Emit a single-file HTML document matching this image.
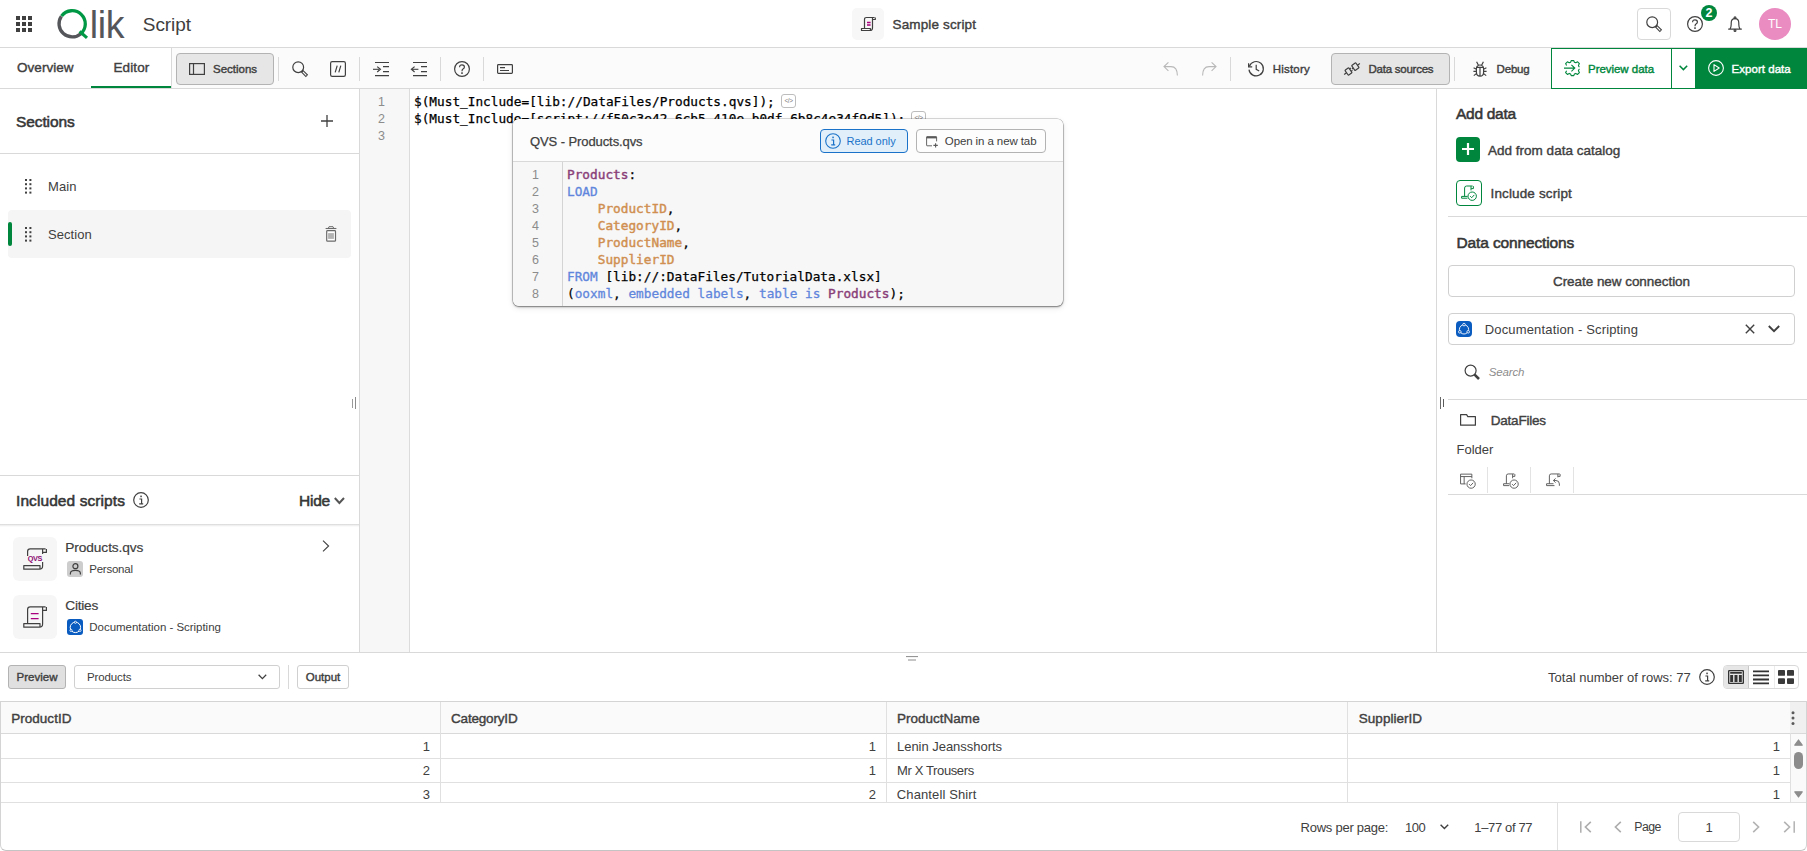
<!DOCTYPE html>
<html lang="en">
<head>
<meta charset="utf-8">
<title>Sample script - Script</title>
<style>
*{box-sizing:border-box;margin:0;padding:0}
html,body{width:1807px;height:851px;overflow:hidden;background:#fff}
body{font-family:"Liberation Sans",sans-serif;color:#404040;font-size:13px;position:relative}
.abs{position:absolute}
.t{position:absolute;white-space:nowrap;line-height:1}
.b{font-weight:normal;-webkit-text-stroke:0.4px}
.b2{font-weight:normal;-webkit-text-stroke:0.55px;color:#363636}
svg{position:absolute;overflow:visible}
.ic{fill:none;stroke:#404040;stroke-width:1.2}
.sep{position:absolute;width:1px;background:#d9d9d9}
.hl{position:absolute;height:1px;background:#d9d9d9}
.mono{font-family:"DejaVu Sans Mono","Liberation Mono",monospace;font-size:12.75px;line-height:17px;white-space:pre;-webkit-text-stroke:0.25px}
.ln{font-family:"Liberation Sans",sans-serif;font-size:12.5px;color:#8c8c8c;text-align:right;line-height:17px}
/* header */
#hdr{left:0;top:0;width:1807px;height:48px;border-bottom:1px solid #d9d9d9;background:#fff}
#tb{left:0;top:48px;width:1807px;height:41px;border-bottom:1px solid #d9d9d9;background:#fbfbfb}
#tabs{left:0;top:48px;width:172px;height:40px;background:#fff;border-right:1px solid #d9d9d9}
.btn{position:absolute;border:1px solid #b3b3b3;border-radius:4px;background:#e6e6e6}
.kw{color:#5f86dc;-webkit-text-stroke:0.3px}
.fld{color:#d08f50;-webkit-text-stroke:0.42px}
.tbl{color:#8a3f79;-webkit-text-stroke:0.42px}
</style>
</head>
<body>
<!-- ================= HEADER ================= -->
<div id="hdr" class="abs"></div>
<div id="tb" class="abs"></div>
<div id="tabs" class="abs"></div>
<!-- app launcher grid -->
<svg style="left:16px;top:16px" width="16" height="16" viewBox="0 0 16 16"><g fill="#404040"><rect x="0" y="0" width="4" height="4"/><rect x="6" y="0" width="4" height="4"/><rect x="12" y="0" width="4" height="4"/><rect x="0" y="6" width="4" height="4"/><rect x="6" y="6" width="4" height="4"/><rect x="12" y="6" width="4" height="4"/><rect x="0" y="12" width="4" height="4"/><rect x="6" y="12" width="4" height="4"/><rect x="12" y="12" width="4" height="4"/></g></svg>
<!-- Qlik logo -->
<svg style="left:54px;top:6px" width="74" height="36" viewBox="54 6 74 36" aria-label="Qlik"><title>Qlik</title>
<path d="M80.9 33.7 A13.2 13.2 0 0 1 61.4 16.2" fill="none" stroke="#54565a" stroke-width="3.3"/>
<path d="M61.6 15.9 A13.2 13.2 0 1 1 80.6 34" fill="none" stroke="#009845" stroke-width="3.3"/>
<path d="M79.6 31.4 L87 37.9" fill="none" stroke="#009845" stroke-width="3.2"/>
<text x="89.7" y="38.2" transform="translate(0,38.2) scale(1,1.02) translate(0,-38.2)" font-family="Liberation Sans, sans-serif" font-size="37.5" fill="#54565a" letter-spacing="-0.35">lik</text>
</svg>
<div class="t" style="left:142.8px;top:15px;font-size:19px;color:#404040;letter-spacing:-0.07px">Script</div>
<!-- center title -->
<div class="abs" style="left:852px;top:8px;width:32px;height:32px;background:#f7f7f7;border-radius:5px"></div>
<svg style="left:860px;top:16px" width="16" height="16" viewBox="0 0 16 16"><path class="ic" d="M4.5 12.5 V3.5 Q4.5 1.5 6.5 1.5 H14.5 M12.5 1.6 V12 Q12.5 14.5 10 14.5 H1.5 V12.5 H10.4 V14.3 M12.6 3.5 H15.3 V1.6" stroke-linejoin="round"/><path d="M7 6.5h3.6M7 9h3.6" stroke="#a8007e" stroke-width="1.3" fill="none"/></svg>
<div class="t b" style="left:892.5px;top:18px;font-size:13.5px;color:#404040;letter-spacing:0.14px">Sample script</div>
<!-- right icons -->
<div class="abs" style="left:1637px;top:8px;width:34px;height:32px;border:1px solid #d9d9d9;border-radius:4px;background:#fff"></div>
<svg style="left:1646px;top:16px" width="16" height="16" viewBox="0 0 16 16"><circle cx="6.2" cy="6.2" r="5.4" class="ic" stroke-width="1.3"/><path d="M10.1 10.1 L15 15" stroke="#404040" stroke-width="3.2" fill="none"/><path d="M10.9 10.9 L14.3 14.3" stroke="#fff" stroke-width="1.2" fill="none"/></svg>
<svg style="left:1687px;top:16px" width="16" height="16" viewBox="0 0 16 16"><circle cx="8" cy="8" r="7.4" class="ic"/><path class="ic" d="M5.6 6.2 Q5.6 3.8 8 3.8 Q10.4 3.8 10.4 6 Q10.4 7.3 9 8 Q8 8.6 8 10.2" stroke-width="1.4"/><rect x="7.2" y="11.3" width="1.6" height="1.6" fill="#404040"/></svg>
<div class="abs" style="left:1701px;top:5px;width:16px;height:16px;border-radius:8px;background:#00873d"></div>
<div class="t" style="left:1701px;top:6.5px;width:16px;text-align:center;font-size:12.5px;font-weight:bold;color:#fff">2</div>
<svg style="left:1727px;top:16px" width="16" height="16" viewBox="0 0 16 16"><path class="ic" d="M1.2 13.1 H14.8 M2.9 13.1 Q4.2 11.4 4.2 8.6 V7 Q4.2 2.7 8 2.7 Q11.8 2.7 11.8 7 V8.6 Q11.8 11.4 13.1 13.1" stroke-width="1.1"/><circle cx="8" cy="1.7" r="0.9" class="ic" stroke-width="0.9"/><circle cx="8" cy="14.4" r="0.9" class="ic" stroke-width="0.9"/></svg>
<div class="abs" style="left:1759px;top:8px;width:32px;height:32px;border-radius:16px;background:#ea8cc2"></div>
<div class="t" style="left:1759px;top:18px;width:32px;text-align:center;font-size:12px;color:#fff">TL</div>
<!--HEADER-END-->
<!-- tabs -->
<div class="t b" style="left:17px;top:61px;font-size:13.5px;letter-spacing:0.04px">Overview</div>
<div class="t b" style="left:113.4px;top:61px;font-size:13.5px;letter-spacing:0.13px">Editor</div>
<div class="abs" style="left:91px;top:86px;width:80px;height:2px;background:#00873d"></div>
<!-- Sections button -->
<div class="btn" style="left:176px;top:53px;width:98px;height:32px"></div>
<svg style="left:189px;top:63px" width="16" height="12" viewBox="0 0 16 12"><rect x="0.6" y="0.6" width="14.8" height="10.8" class="ic"/><path d="M4.5 0.6V11.4" class="ic"/></svg>
<div class="t b" style="left:213px;top:63.8px;font-size:11.5px;letter-spacing:-0.01px">Sections</div>
<div class="sep" style="left:278px;top:57px;height:24px"></div>
<!-- search -->
<svg style="left:292px;top:61px" width="16" height="16" viewBox="0 0 16 16"><circle cx="6.2" cy="6.2" r="5.4" class="ic" stroke-width="1.3"/><path d="M10.1 10.1 L15 15" stroke="#404040" stroke-width="3.2" fill="none"/><path d="M10.9 10.9 L14.3 14.3" stroke="#fbfbfb" stroke-width="1.2" fill="none"/></svg>
<!-- comment -->
<svg style="left:330px;top:61px" width="16" height="16" viewBox="0 0 16 16"><rect x="0.6" y="0.6" width="14.8" height="14.8" rx="1.6" class="ic"/><path d="M5.2 11.4 L7.2 4.6 M8.8 11.4 L10.8 4.6" class="ic" stroke-width="1.3"/></svg>
<div class="sep" style="left:359px;top:57px;height:24px"></div>
<!-- indent -->
<svg style="left:373px;top:61px" width="16" height="16" viewBox="0 0 16 16"><path class="ic" d="M2 1.5H16M10 5.6H16M10 10.6H16M2 14.6H16" stroke-width="1"/><path d="M0 8.3H6" stroke="#404040" stroke-width="1.1"/><path d="M4.2 5.6L7.4 8.3L4.2 11" class="ic"/></svg>
<!-- outdent -->
<svg style="left:411px;top:61px" width="16" height="16" viewBox="0 0 16 16"><path class="ic" d="M2 1.5H16M10 5.6H16M10 10.6H16M2 14.6H16" stroke-width="1"/><path d="M1 8.3H7.4" stroke="#404040" stroke-width="1.1"/><path d="M3.6 5.6L0.4 8.3L3.6 11" class="ic"/></svg>
<div class="sep" style="left:440px;top:57px;height:24px"></div>
<!-- help -->
<svg style="left:454px;top:61px" width="16" height="16" viewBox="0 0 16 16"><circle cx="8" cy="8" r="7.4" class="ic"/><path class="ic" d="M5.6 6.2 Q5.6 3.8 8 3.8 Q10.4 3.8 10.4 6 Q10.4 7.3 9 8 Q8 8.6 8 10.2" stroke-width="1.4"/><rect x="7.2" y="11.3" width="1.6" height="1.6" fill="#404040"/></svg>
<div class="sep" style="left:483px;top:57px;height:24px"></div>
<!-- snippet -->
<svg style="left:497px;top:64px" width="16" height="10" viewBox="0 0 16 10"><rect x="0.6" y="0.6" width="14.8" height="8.8" rx="0.8" class="ic"/><path d="M3 3.6H8M3 6.5H12" class="ic" stroke-width="1.1"/></svg>
<!-- undo / redo -->
<svg style="left:1163px;top:61px" width="16" height="16" viewBox="0 0 16 16"><path d="M5.4 1.4 L1 5.6 L5.4 9.8 M1.2 5.6 H8 Q14.4 5.6 14.4 14.6" fill="none" stroke="#b8b8b8" stroke-width="1.1"/></svg>
<svg style="left:1201px;top:61px" width="16" height="16" viewBox="0 0 16 16"><path d="M10.6 1.4 L15 5.6 L10.6 9.8 M14.8 5.6 H8 Q1.6 5.6 1.6 14.6" fill="none" stroke="#b8b8b8" stroke-width="1.1"/></svg>
<div class="sep" style="left:1230px;top:57px;height:24px"></div>
<!-- history -->
<svg style="left:1247.8px;top:61.4px" width="16" height="16" viewBox="0 0 16 16"><path class="ic" d="M1.4 5.2 A7.2 7.2 0 1 1 1 8.6"/><path d="M0.6 2.2 V5.8 H4.2" class="ic"/><path d="M8.2 3.8 V8.4 L11.2 10" class="ic"/></svg>
<div class="t b" style="left:1272.7px;top:63.8px;font-size:11.5px;letter-spacing:0.2px">History</div>
<!-- data sources -->
<div class="btn" style="left:1331px;top:53px;width:119px;height:32px"></div>
<svg style="left:1344px;top:61px" width="16" height="16" viewBox="0 0 16 16"><g transform="rotate(-35 8 8)" class="ic"><path d="M-1.6 8H1.4M14.6 8H17.6"/><rect x="1.4" y="5" width="4.6" height="6" rx="0.6"/><path d="M6 6.6H7.6M6 9.4H7.6"/><rect x="9.6" y="5" width="5" height="6" rx="0.6"/><path d="M8 8H9.6"/></g></svg>
<div class="t b" style="left:1368.5px;top:63.8px;font-size:11.5px;letter-spacing:-0.24px">Data sources</div>
<div class="sep" style="left:1454px;top:57px;height:24px"></div>
<!-- debug -->
<svg style="left:1472px;top:61px" width="16" height="16" viewBox="0 0 16 16"><path class="ic" d="M4.4 8 Q4.4 4 8 4 Q11.6 4 11.6 8 V11 Q11.6 15.2 8 15.2 Q4.4 15.2 4.4 11 Z M8 6.4 V15 M4.6 6.4 H11.4 M4.4 8.2 L1.6 6.8 M4.4 10.4 H1.4 M4.6 12.4 L1.8 14.6 M11.6 8.2 L14.4 6.8 M11.6 10.4 H14.6 M11.4 12.4 L14.2 14.6 M6.4 4.2 L4.6 0.8 M9.6 4.2 L11.4 0.8" stroke-width="1"/></svg>
<div class="t b" style="left:1496.6px;top:63.8px;font-size:11.5px;letter-spacing:-0.2px">Debug</div>
<!-- preview data -->
<div class="abs" style="left:1551px;top:48px;width:145px;height:41px;border:1px solid #00873d;background:#fff"></div>
<div class="abs" style="left:1671px;top:48px;width:1px;height:41px;background:#00873d"></div>
<svg style="left:1564px;top:60px" width="16" height="16" viewBox="0 0 16 16"><g fill="none" stroke="#00873d" stroke-width="1.1"><path d="M2.6 5.4 L1.6 3.6 L3.4 1.8 L5.2 2.8 L6.6 2.2 L7.2 0.6 H9.8 L10.4 2.2 L11.8 2.8 L13.6 1.8 L15.4 3.6 L14.4 5.4 L15 6.8 H15.6 M15.6 9.4 H15 L14.4 10.8 L15.4 12.6 L13.6 14.4 L11.8 13.4 L10.4 14 L9.8 15.6 H7.2 L6.6 14 L5.2 13.4 L3.4 14.4 L1.6 12.6 L2.6 10.8" stroke-linejoin="round"/><path d="M0 8.1H10.4M7.4 4.8L10.8 8.1L7.4 11.4"/></g></svg>
<div class="t b" style="left:1588px;top:63.8px;font-size:11.5px;color:#00873d;letter-spacing:-0.04px">Preview data</div>
<svg style="left:1679px;top:65px" width="9" height="6" viewBox="0 0 9 6"><path d="M0.6 0.8L4.4 4.6L8.2 0.8" fill="none" stroke="#00873d" stroke-width="1.5"/></svg>
<!-- export data -->
<div class="abs" style="left:1695px;top:48px;width:112px;height:41px;background:#00873d"></div>
<svg style="left:1708px;top:60px" width="16" height="16" viewBox="0 0 16 16"><circle cx="8" cy="8" r="7.4" fill="none" stroke="#fff" stroke-width="1.1"/><path d="M6 4.6 L11.2 8 L6 11.4Z" fill="none" stroke="#fff" stroke-width="1.1" stroke-linejoin="round"/></svg>
<div class="t b" style="left:1731.6px;top:63.8px;font-size:11.5px;color:#fff;letter-spacing:0.03px">Export data</div>
<!--TOOLBAR-END-->
<!-- left panel -->
<div class="abs" style="left:0;top:89px;width:360px;height:563px;background:#fff;border-right:1px solid #d9d9d9"></div>
<div class="t b2" style="left:16px;top:114px;font-size:15.5px;letter-spacing:-0.1px">Sections</div>
<svg style="left:321px;top:115px" width="12" height="12" viewBox="0 0 12 12"><path d="M6 0V12M0 6H12" stroke="#404040" stroke-width="1.3" fill="none"/></svg>
<div class="hl" style="left:0;top:153px;width:359px"></div>
<!-- Main row -->
<svg style="left:25px;top:179px" width="7" height="15" viewBox="0 0 7 15"><g fill="#404040"><rect x="0" y="0" width="2" height="2"/><rect x="4.4" y="0" width="2" height="2"/><rect x="0" y="4.2" width="2" height="2"/><rect x="4.4" y="4.2" width="2" height="2"/><rect x="0" y="8.4" width="2" height="2"/><rect x="4.4" y="8.4" width="2" height="2"/><rect x="0" y="12.6" width="2" height="2"/><rect x="4.4" y="12.6" width="2" height="2"/></g></svg>
<div class="t" style="left:48px;top:180px;font-size:13px;letter-spacing:0.06px">Main</div>
<!-- Section row -->
<div class="abs" style="left:8px;top:210px;width:343px;height:48px;background:#f5f5f5;border-radius:4px"></div>
<div class="abs" style="left:8px;top:222px;width:4px;height:24px;background:#00873d;border-radius:2px"></div>
<svg style="left:25px;top:227px" width="7" height="15" viewBox="0 0 7 15"><g fill="#404040"><rect x="0" y="0" width="2" height="2"/><rect x="4.4" y="0" width="2" height="2"/><rect x="0" y="4.2" width="2" height="2"/><rect x="4.4" y="4.2" width="2" height="2"/><rect x="0" y="8.4" width="2" height="2"/><rect x="4.4" y="8.4" width="2" height="2"/><rect x="0" y="12.6" width="2" height="2"/><rect x="4.4" y="12.6" width="2" height="2"/></g></svg>
<div class="t" style="left:48px;top:228px;font-size:13px;letter-spacing:0.05px">Section</div>
<svg style="left:325px;top:226px" width="12" height="16" viewBox="0 0 12 16"><path d="M3.3 2.4 L4 0.7 H8 L8.7 2.4" fill="#fff" stroke="#6a6a6a" stroke-width="1"/><path d="M0.6 2.5H11.4" stroke="#6a6a6a" stroke-width="1.1"/><rect x="1.7" y="4.6" width="8.8" height="10.6" rx="0.8" fill="#fff" stroke="#6a6a6a" stroke-width="1.2"/><rect x="3.1" y="7.1" width="5.8" height="5.8" fill="#b3b3b3"/></svg>
<!-- resize handle -->
<div class="abs" style="left:352px;top:398.5px;width:1.2px;height:9px;background:#9a9a9a"></div>
<div class="abs" style="left:355px;top:397px;width:1.3px;height:12px;background:#8c8c8c"></div>
<!-- included scripts -->
<div class="hl" style="left:0;top:475px;width:359px"></div>
<div class="t b2" style="left:16px;top:493px;font-size:15.5px;letter-spacing:0.08px">Included scripts</div>
<svg style="left:133px;top:492px" width="16" height="16" viewBox="0 0 16 16"><circle cx="8" cy="8" r="7.3" class="ic" stroke-width="1.1"/><rect x="7.3" y="3.6" width="1.5" height="1.6" fill="#404040"/><path d="M6.4 7H8.6V11.8M6.2 11.9H10.2" class="ic" stroke-width="1.2"/></svg>
<div class="t b2" style="left:299px;top:493px;font-size:15.5px;letter-spacing:-0.25px">Hide</div>
<svg style="left:334px;top:496.5px" width="11" height="8" viewBox="0 0 11 8"><path d="M0.8 1L5.4 6L10 1" fill="none" stroke="#555" stroke-width="2"/></svg>
<div class="abs" style="left:0;top:524px;width:359px;height:3px;background:linear-gradient(#d4d4d4,#ededed 40%,#fff)"></div>
<!-- item 1 -->
<div class="abs" style="left:13px;top:537px;width:44px;height:44px;background:#f6f6f6;border-radius:6px"></div>
<svg style="left:23px;top:548px" width="24" height="22" viewBox="0 0 24 22"><path class="ic" d="M4.6 8 V3.4 Q4.6 0.8 7.2 0.8 H22.6 M19.6 1 V6 M19.8 4.4 H23.4 V1 M19.6 14 V18 Q19.6 21.2 16.4 21.2 H0.8 V17.6 H17 V21" stroke-linejoin="round" stroke-width="1.2"/><text x="11.9" y="12.9" text-anchor="middle" font-family="Liberation Sans, sans-serif" font-weight="bold" font-size="7.3" fill="#8c0a72" letter-spacing="-0.3">QVS</text></svg>
<div class="t" style="left:65.3px;top:541px;font-size:13.7px;-webkit-text-stroke:0.2px;letter-spacing:-0.09px">Products.qvs</div>
<svg style="left:322px;top:540px" width="8" height="12" viewBox="0 0 8 12"><path d="M1 0.6L6.6 6L1 11.4" fill="none" stroke="#404040" stroke-width="1.1"/></svg>
<div class="abs" style="left:67px;top:561px;width:16px;height:16px;background:#cdcdcd;border-radius:3px"></div>
<svg style="left:67px;top:561px" width="16" height="16" viewBox="0 0 16 16"><circle cx="8.4" cy="5.2" r="2.5" class="ic" stroke-width="0.9"/><path d="M3.4 13.4 V12.4 Q3.4 9.4 8.4 9.4 Q13.4 9.4 13.4 12.4 V13.4" class="ic" stroke-width="0.9"/></svg>
<div class="t" style="left:89.3px;top:564px;font-size:11.5px;letter-spacing:-0.25px">Personal</div>
<!-- item 2 -->
<div class="abs" style="left:13px;top:595px;width:44px;height:44px;background:#f6f6f6;border-radius:6px"></div>
<svg style="left:23px;top:606px" width="24" height="22" viewBox="0 0 24 22"><path class="ic" d="M4.6 17.4 V3.4 Q4.6 0.8 7.2 0.8 H22.6 M19.6 1 V18 Q19.6 21.2 16.4 21.2 H0.8 V17.6 H17 V21 M19.8 4.4 H23.4 V1" stroke-linejoin="round" stroke-width="1.2"/><path d="M7.8 7.6H15.6M7.8 12.6H15.6" stroke="#a8007e" stroke-width="1.3" fill="none"/></svg>
<div class="t" style="left:65.3px;top:599px;font-size:13.7px;-webkit-text-stroke:0.2px;letter-spacing:-0.24px">Cities</div>
<div class="abs" style="left:67px;top:619px;width:16px;height:16px;background:#0b5cc0;border-radius:3px"></div>
<svg style="left:67px;top:619px" width="16" height="16" viewBox="0 0 16 16"><circle cx="8.4" cy="8.4" r="5.2" fill="none" stroke="#fff" stroke-width="1"/><circle cx="8.4" cy="3.3" r="1.1" fill="#0b5cc0" stroke="#fff" stroke-width="0.8"/><circle cx="4" cy="11.4" r="1.1" fill="#0b5cc0" stroke="#fff" stroke-width="0.8"/><circle cx="13" cy="11.4" r="1.1" fill="#0b5cc0" stroke="#fff" stroke-width="0.8"/></svg>
<div class="t" style="left:89.3px;top:622px;font-size:11.5px;letter-spacing:-0.03px">Documentation - Scripting</div>
<!--LEFT-END-->
<!-- editor -->
<div class="abs" style="left:360px;top:89px;width:50px;height:563px;background:#f7f7f7;border-right:1px solid #dcdcdc"></div>
<div class="abs ln" style="left:360px;top:94px;width:25px">1<br>2<br>3</div>
<div class="abs mono" style="left:414px;top:93px;color:#000">$(Must_Include=[lib://DataFiles/Products.qvs]);
$(Must_Include=[script://f50c3e42-6cb5-410e-b0df-6b8c4e34f9d5]);</div>
<div class="abs" style="left:781px;top:94px;width:15px;height:14px;border:1px solid #bdbdbd;border-radius:3px;background:#fff"></div>
<div class="t" style="left:781px;top:97.5px;width:15px;text-align:center;font-size:6.5px;color:#7a7a7a;letter-spacing:-0.5px">&lt;/&gt;</div>
<div class="abs" style="left:911px;top:111px;width:15px;height:14px;border:1px solid #bdbdbd;border-radius:3px;background:#fff"></div>
<div class="t" style="left:911px;top:114.5px;width:15px;text-align:center;font-size:6.5px;color:#7a7a7a;letter-spacing:-0.5px">&lt;/&gt;</div>
<!-- popup -->
<div class="abs" style="left:513px;top:119.4px;width:550px;height:187.1px;background:#f7f7f7;border-radius:6px;box-shadow:0 0 0 0.6px rgba(0,0,0,.28),0 1px 2px rgba(0,0,0,.42),0 2px 6px rgba(0,0,0,.1);overflow:hidden">
  <div class="abs" style="left:0;top:0;width:550px;height:42.6px;background:#fcfcfc;border-bottom:1px solid #d9d9d9"></div>
  <div class="abs" style="left:0;top:42.6px;width:50px;height:146px;background:#f7f7f7;border-right:1px solid #d4d4d4"></div>
</div>
<div class="t" style="left:530px;top:135px;font-size:13px;color:#404040;-webkit-text-stroke:0.25px #404040;letter-spacing:-0.09px">QVS - Products.qvs</div>
<div class="abs" style="left:820px;top:129px;width:88px;height:24px;border:1px solid #1a73c8;border-radius:4px;background:#e1effb"></div>
<svg style="left:825px;top:133px" width="16" height="16" viewBox="0 0 16 16"><circle cx="8" cy="8" r="7.3" fill="none" stroke="#1a73c8" stroke-width="1.1"/><rect x="7.3" y="3.6" width="1.5" height="1.6" fill="#1a73c8"/><path d="M6.4 7H8.6V11.8M6.2 11.9H10.2" fill="none" stroke="#1a73c8" stroke-width="1.2"/></svg>
<div class="t" style="left:846.5px;top:136px;font-size:11px;color:#1a73c8;letter-spacing:-0.05px">Read only</div>
<div class="abs" style="left:916px;top:129px;width:130px;height:24px;border:1px solid #b3b3b3;border-radius:4px;background:#fdfdfd"></div>
<svg style="left:925.5px;top:135.5px" width="12" height="12" viewBox="0 0 12 12"><path d="M10.6 5.4 V1 Q10.6 0.6 10.2 0.6 H1 Q0.6 0.6 0.6 1 V9.4 Q0.6 9.8 1 9.8 H6" fill="none" stroke="#666" stroke-width="1"/><path d="M0.6 1.6H10.6" stroke="#595959" stroke-width="1.6"/><path d="M9.6 7.2V11.6M7.4 9.4H11.8" stroke="#595959" stroke-width="1.1"/></svg>
<div class="t" style="left:944.8px;top:136px;font-size:11.5px;color:#404040;letter-spacing:-0.1px">Open in a new tab</div>
<div class="abs ln" style="left:513px;top:166.7px;width:26px">1<br>2<br>3<br>4<br>5<br>6<br>7<br>8</div>
<div class="abs mono" style="left:567px;top:166px;color:#000"><span class="tbl">Products</span>:
<span class="kw">LOAD</span>
    <span class="fld">ProductID</span>,
    <span class="fld">CategoryID</span>,
    <span class="fld">ProductName</span>,
    <span class="fld">SupplierID</span>
<span class="kw">FROM</span> [lib://:DataFiles/TutorialData.xlsx]
(<span class="kw">ooxml</span>, <span class="kw">embedded labels</span>, <span class="kw">table is</span> <span class="tbl">Products</span>);</div>
<!--EDITOR-END-->
<!-- right panel -->
<div class="abs" style="left:1436px;top:89px;width:371px;height:563px;background:#fff;border-left:1px solid #d9d9d9"></div>
<div class="abs" style="left:1440px;top:397.3px;width:1px;height:11.5px;background:#6a6a6a"></div>
<div class="abs" style="left:1443px;top:398.8px;width:1.1px;height:8.4px;background:#5a5a5a"></div>
<div class="t b2" style="left:1456px;top:106px;font-size:15.5px;letter-spacing:-0.28px">Add data</div>
<div class="abs" style="left:1456px;top:137px;width:24px;height:25px;background:#00873d;border-radius:4px"></div>
<svg style="left:1462px;top:143px" width="12" height="12" viewBox="0 0 12 12"><path d="M6 0V12M0 6H12" stroke="#fff" stroke-width="2.2" fill="none"/></svg>
<div class="t" style="left:1488px;top:144px;font-size:13.5px;-webkit-text-stroke:0.4px;letter-spacing:0.01px">Add from data catalog</div>
<div class="abs" style="left:1456px;top:180px;width:26px;height:26px;border:1px solid #00873d;border-radius:4px;background:#fff"></div>
<svg style="left:1461px;top:185px" width="16" height="16" viewBox="0 0 16 16"><g fill="none" stroke="#00873d" stroke-width="1"><path d="M3.6 11.4 V3 Q3.6 1 5.6 1 H11.6 M10 1.2 V5.4 M10.2 3.6 H12.4 V1.2 M6.4 13.2 H0.6 V11.4 H6.6"/><circle cx="11.2" cy="11.2" r="4.2"/><path d="M9.2 11.2 L10.7 12.7 L13.3 9.9"/></g></svg>
<div class="t" style="left:1490.5px;top:187px;font-size:13.5px;-webkit-text-stroke:0.4px;letter-spacing:0.14px">Include script</div>
<div class="hl" style="left:1448px;top:216px;width:359px"></div>
<div class="t b2" style="left:1456.5px;top:235px;font-size:15.5px;letter-spacing:-0.13px">Data connections</div>
<div class="abs" style="left:1448px;top:265px;width:347px;height:32px;border:1px solid #d0d0d0;border-radius:4px;background:#fff"></div>
<div class="t b" style="left:1448px;top:275px;width:347px;text-align:center;font-size:13.5px;letter-spacing:-0.05px">Create new connection</div>
<div class="abs" style="left:1448px;top:313px;width:347px;height:32px;border:1px solid #d0d0d0;border-radius:4px;background:#fff"></div>
<div class="abs" style="left:1456px;top:321px;width:16px;height:16px;background:#0b5cc0;border-radius:4px"></div>
<svg style="left:1456px;top:321px" width="16" height="16" viewBox="0 0 16 16"><circle cx="8" cy="8.4" r="4.6" fill="none" stroke="#fff" stroke-width="0.9"/><circle cx="8" cy="3.6" r="1.3" fill="#0b5cc0" stroke="#fff" stroke-width="0.8"/><circle cx="3.8" cy="10.8" r="1.3" fill="#0b5cc0" stroke="#fff" stroke-width="0.8"/><circle cx="12.2" cy="10.8" r="1.3" fill="#0b5cc0" stroke="#fff" stroke-width="0.8"/></svg>
<div class="t" style="left:1484.8px;top:323px;font-size:13px;letter-spacing:0.15px">Documentation - Scripting</div>
<svg style="left:1745px;top:324px" width="10" height="10" viewBox="0 0 10 10"><path d="M0.8 0.8L9.2 9.2M9.2 0.8L0.8 9.2" stroke="#404040" stroke-width="1.4" fill="none"/></svg>
<svg style="left:1768px;top:325px" width="12" height="8" viewBox="0 0 12 8"><path d="M0.8 1L6 6.2L11.2 1" fill="none" stroke="#404040" stroke-width="1.9"/></svg>
<svg style="left:1464px;top:364px" width="16" height="16" viewBox="0 0 16 16"><circle cx="6.6" cy="6.6" r="5.5" class="ic" stroke-width="1.8"/><path d="M10.6 10.6 L15 15" stroke="#404040" stroke-width="2.6" fill="none"/></svg>
<div class="t" style="left:1488.7px;top:367px;font-size:11.5px;font-style:italic;color:#8c8c8c;letter-spacing:-0.13px">Search</div>
<div class="hl" style="left:1448px;top:399px;width:359px"></div>
<svg style="left:1460px;top:414px" width="16" height="12" viewBox="0 0 16 12"><path d="M0.6 11.2 V0.6 H6.6 L7.8 2.6 H15.4 V11.2 Z" class="ic" stroke-width="1.2" stroke-linejoin="round"/></svg>
<div class="t b" style="left:1490.8px;top:414px;font-size:13.5px;letter-spacing:-0.23px">DataFiles</div>
<div class="t" style="left:1456.6px;top:443px;font-size:13px;letter-spacing:-0.01px">Folder</div>
<!-- action icons -->
<svg style="left:1460px;top:472.8px" width="16" height="16" viewBox="0 0 17 17"><g fill="none" stroke="#595959" stroke-width="1"><path d="M6 11.6 H0.6 V1.2 H12.6 V5.6 M0.6 3.8 H12.6 M4.4 3.8 V11.6"/><circle cx="11.8" cy="11.8" r="4.4"/><path d="M9.6 11.8 L11.2 13.4 L14 10.4"/></g></svg>
<div class="sep" style="left:1487px;top:467px;height:26px;background:#e3e3e3"></div>
<svg style="left:1503px;top:472.8px" width="16" height="16" viewBox="0 0 17 17"><g fill="none" stroke="#595959" stroke-width="1"><path d="M3.6 11.4 V3 Q3.6 1 5.6 1 H12 M10.2 1.2 V5.6 M10.4 3.6 H12.6 V1.2 M6.6 13.4 H0.6 V11.4 H6.8"/><circle cx="11.8" cy="11.8" r="4.4"/><path d="M9.6 11.8 L11.2 13.4 L14 10.4"/></g></svg>
<div class="sep" style="left:1530px;top:467px;height:26px;background:#e3e3e3"></div>
<svg style="left:1546px;top:472.8px" width="16" height="16" viewBox="0 0 17 17"><g fill="none" stroke="#595959" stroke-width="1"><path d="M3.6 11.4 V3 Q3.6 1 5.6 1 H14.6 M12.6 1.2 V4.6 M12.8 3.6 H15 V1.2 M9 13.4 H0.6 V11.4 H8"/><path d="M8 8 H10.6 Q14.2 8 14.2 11.6 V13.6 M10.2 5.8 L7.8 8 L10.2 10.2"/></g></svg>
<div class="sep" style="left:1573px;top:467px;height:26px;background:#e3e3e3"></div>
<div class="hl" style="left:1448px;top:494px;width:359px"></div>
<!--RIGHT-END-->
<!-- bottom panel -->
<div class="abs" style="left:0;top:652px;width:1807px;height:199px;background:#fff;border-top:1px solid #d9d9d9"></div>
<svg style="left:906px;top:656px" width="12" height="5" viewBox="0 0 12 5"><path d="M0 0.6H12M2 4H10" stroke="#8c8c8c" stroke-width="1" fill="none"/></svg>
<div class="btn" style="left:8px;top:665px;width:58px;height:24px;background:#e0e0e0;border-radius:3px"></div>
<div class="t b" style="left:8px;top:672px;width:58px;text-align:center;font-size:11.5px">Preview</div>
<div class="abs" style="left:74px;top:665px;width:206px;height:24px;border:1px solid #d0d0d0;border-radius:3px;background:#fff"></div>
<div class="t" style="left:87px;top:672px;font-size:11.5px;letter-spacing:-0.12px">Products</div>
<svg style="left:258px;top:674px" width="9" height="6" viewBox="0 0 9 6"><path d="M0.6 0.8L4.4 4.6L8.2 0.8" fill="none" stroke="#404040" stroke-width="1.3"/></svg>
<div class="sep" style="left:288px;top:665px;height:24px"></div>
<div class="abs" style="left:297px;top:665px;width:52px;height:24px;border:1px solid #d0d0d0;border-radius:3px;background:#fff"></div>
<div class="t b" style="left:297px;top:672px;width:52px;text-align:center;font-size:11.5px">Output</div>
<div class="t" style="left:1548px;top:671px;font-size:13px;letter-spacing:0.02px">Total number of rows: 77</div>
<svg style="left:1699px;top:669px" width="16" height="16" viewBox="0 0 16 16"><circle cx="8" cy="8" r="7.3" class="ic" stroke-width="1.1"/><rect x="7.3" y="3.6" width="1.5" height="1.6" fill="#404040"/><path d="M6.4 7H8.6V11.8M6.2 11.9H10.2" class="ic" stroke-width="1.2"/></svg>
<!-- view toggle -->
<div class="abs" style="left:1723px;top:665px;width:76px;height:24px;border:1px solid #d9d9d9;border-radius:4px;background:#fff;overflow:hidden"><div class="abs" style="left:0;top:0;width:25px;height:22px;background:#e6e6e6;border-right:1px solid #c8c8c8"></div><div class="abs" style="left:50px;top:0;width:1px;height:22px;background:#ececec"></div></div>
<svg style="left:1728px;top:670px" width="16" height="14" viewBox="0 0 16 14"><rect x="0.65" y="0.65" width="14.7" height="12.7" rx="0.6" fill="none" stroke="#333" stroke-width="1.3"/><rect x="2.2" y="2" width="11.6" height="1.7" fill="#333"/><rect x="2.2" y="5" width="2.9" height="7" fill="#333"/><rect x="6.5" y="5" width="3" height="7" fill="#333"/><rect x="10.9" y="5" width="2.9" height="7" fill="#333"/></svg>
<svg style="left:1753px;top:670px" width="16" height="14" viewBox="0 0 16 14"><path d="M0 1.4H16M0 5.4H16M0 9.5H16M0 13.4H16" stroke="#333" stroke-width="1.8" fill="none"/></svg>
<svg style="left:1778px;top:670px" width="16" height="14" viewBox="0 0 16 14"><g fill="#3a3a3a"><rect x="0" y="0" width="7" height="5.8" rx="0.9"/><rect x="9" y="0" width="7" height="5.8" rx="0.9"/><rect x="0" y="8.2" width="7" height="5.8" rx="0.9"/><rect x="9" y="8.2" width="7" height="5.8" rx="0.9"/></g></svg>
<!-- table -->
<div class="abs" style="left:0;top:701px;width:1807px;height:150px;border:1px solid #d4d4d4;border-bottom-color:#c4c4c4;border-radius:0 0 6px 6px;background:#fff"></div>
<div class="abs" style="left:1px;top:702px;width:1805px;height:31px;background:#fafafa"></div>
<div class="hl" style="left:1px;top:733px;width:1805px"></div>
<div class="hl" style="left:1px;top:758px;width:1789px;background:#e0e0e0"></div>
<div class="hl" style="left:1px;top:782px;width:1789px;background:#e0e0e0"></div>
<div class="hl" style="left:1px;top:802px;width:1805px;background:#e0e0e0"></div>
<div class="sep" style="left:440px;top:702px;height:100px;background:#e0e0e0"></div>
<div class="sep" style="left:886px;top:702px;height:100px;background:#e0e0e0"></div>
<div class="sep" style="left:1347px;top:702px;height:100px;background:#e0e0e0"></div>
<div class="sep" style="left:1790px;top:702px;height:100px;background:#e0e0e0"></div>
<div class="t b" style="left:11.3px;top:712px;font-size:13.5px;letter-spacing:0.01px">ProductID</div>
<div class="t b" style="left:451px;top:712px;font-size:13.5px;letter-spacing:-0.18px">CategoryID</div>
<div class="t b" style="left:897px;top:712px;font-size:13.5px;letter-spacing:0.01px">ProductName</div>
<div class="t b" style="left:1358.8px;top:712px;font-size:13.5px;letter-spacing:0.02px">SupplierID</div>
<div class="abs" style="left:1790px;top:702px;width:16px;height:31px;background:#f0f0f0"></div>
<svg style="left:1791px;top:711px" width="4" height="15" viewBox="0 0 4 15"><g fill="#5a5a5a"><circle cx="2" cy="1.7" r="1.5"/><circle cx="2" cy="7.1" r="1.5"/><circle cx="2" cy="12.6" r="1.5"/></g></svg>
<div class="abs" style="left:0;top:734px;width:1790px;height:68px;overflow:hidden;font-size:13px">
<div class="t" style="left:300px;width:130px;text-align:right;top:6px">1</div>
<div class="t" style="left:746px;width:130px;text-align:right;top:6px">1</div>
<div class="t" style="left:897px;top:6px;letter-spacing:-0.03px">Lenin Jeansshorts</div>
<div class="t" style="left:1650px;width:130px;text-align:right;top:6px">1</div>
<div class="t" style="left:300px;width:130px;text-align:right;top:30px">2</div>
<div class="t" style="left:746px;width:130px;text-align:right;top:30px">1</div>
<div class="t" style="left:897px;top:30px;letter-spacing:-0.37px">Mr X Trousers</div>
<div class="t" style="left:1650px;width:130px;text-align:right;top:30px">1</div>
<div class="t" style="left:300px;width:130px;text-align:right;top:54px">3</div>
<div class="t" style="left:746px;width:130px;text-align:right;top:54px">2</div>
<div class="t" style="left:896.8px;top:54px;letter-spacing:0.12px">Chantell Shirt</div>
<div class="t" style="left:1650px;width:130px;text-align:right;top:54px">1</div>
</div>
<!-- scrollbar -->
<div class="abs" style="left:1791px;top:734px;width:15px;height:68px;background:#fafafa"></div>
<svg style="left:1794px;top:738.5px" width="9" height="7" viewBox="0 0 9 7"><path d="M0.8 6.2L4.5 1L8.2 6.2Z" fill="#8c8c8c" stroke="#8c8c8c" stroke-width="1.2" stroke-linejoin="round"/></svg>
<div class="abs" style="left:1794px;top:752px;width:9px;height:17px;background:#8c8c8c;border-radius:4.5px"></div>
<svg style="left:1794px;top:791px" width="9" height="7" viewBox="0 0 9 7"><path d="M0.8 0.8L4.5 6L8.2 0.8Z" fill="#8c8c8c" stroke="#8c8c8c" stroke-width="1.2" stroke-linejoin="round"/></svg>
<!-- footer -->
<div class="t" style="left:1300.6px;top:821px;font-size:13px;letter-spacing:-0.25px">Rows per page:</div>
<div class="t" style="left:1405px;top:821px;font-size:13px;letter-spacing:-0.48px">100</div>
<svg style="left:1440px;top:824px" width="9" height="6" viewBox="0 0 9 6"><path d="M0.6 0.8L4.4 4.6L8.2 0.8" fill="none" stroke="#404040" stroke-width="1.4"/></svg>
<div class="t" style="left:1474.3px;top:821px;font-size:13px;letter-spacing:-0.35px">1–77 of 77</div>
<div class="sep" style="left:1557px;top:803px;height:47px;background:#e0e0e0"></div>
<svg style="left:1580px;top:821px" width="12" height="12" viewBox="0 0 12 12"><path d="M0.8 0.2V11.8" stroke="#adadad" stroke-width="1.5"/><path d="M10.8 0.8L5.4 6L10.8 11.2" fill="none" stroke="#adadad" stroke-width="1.6"/></svg>
<svg style="left:1614px;top:821px" width="8" height="12" viewBox="0 0 8 12"><path d="M6.8 0.8L1.4 6L6.8 11.2" fill="none" stroke="#adadad" stroke-width="1.6"/></svg>
<div class="t" style="left:1634.3px;top:821px;font-size:12.3px;letter-spacing:-0.52px">Page</div>
<div class="abs" style="left:1678px;top:812px;width:62px;height:30px;border:1px solid #d9d9d9;border-radius:4px;background:#fff"></div>
<div class="t" style="left:1678px;top:821px;width:62px;text-align:center;font-size:13px">1</div>
<svg style="left:1751.5px;top:821px" width="8" height="12" viewBox="0 0 8 12"><path d="M1.2 0.8L6.6 6L1.2 11.2" fill="none" stroke="#b3b3b3" stroke-width="1.6"/></svg>
<svg style="left:1782.5px;top:821px" width="12" height="12" viewBox="0 0 12 12"><path d="M11.2 0.2V11.8" stroke="#b3b3b3" stroke-width="1.5"/><path d="M1.2 0.8L6.6 6L1.2 11.2" fill="none" stroke="#b3b3b3" stroke-width="1.6"/></svg>
<!--BOTTOM-END-->
</body>
</html>
